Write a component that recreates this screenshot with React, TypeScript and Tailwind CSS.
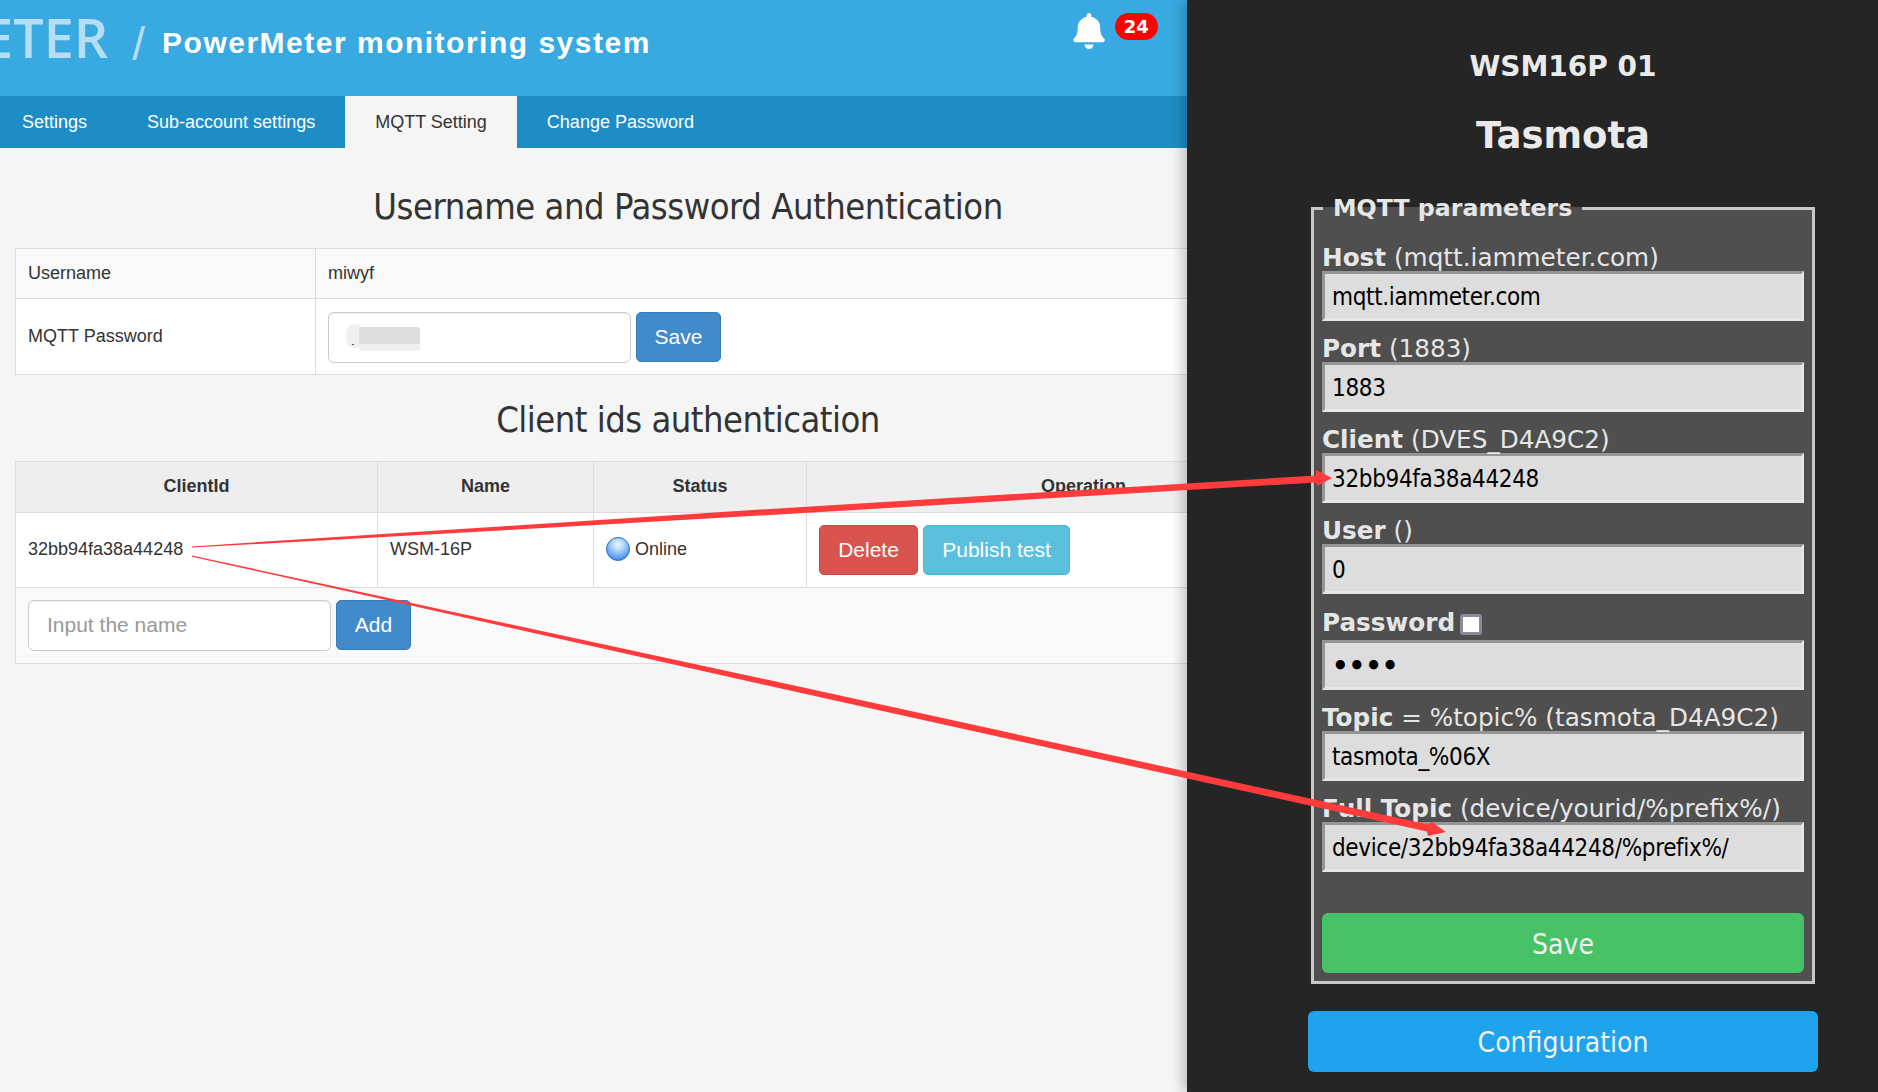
import { FaBell } from 'react-icons/fa';

const tabs = ['Settings', 'Sub-account settings', 'MQTT Setting', 'Change Password'];

const fields = [
  { bold: 'Host', rest: ' (mqtt.iammeter.com)', value: 'mqtt.iammeter.com' },
  { bold: 'Port', rest: ' (1883)', value: '1883' },
  { bold: 'Client', rest: ' (DVES_D4A9C2)', value: '32bb94fa38a44248' },
  { bold: 'User', rest: ' ()', value: '0' },
  { bold: 'Password', rest: '', value: '1234', password: true },
  { bold: 'Topic', rest: ' = %topic% (tasmota_D4A9C2)', value: 'tasmota_%06X' },
  { bold: 'Full Topic', rest: ' (device/yourid/%prefix%/)', value: 'device/32bb94fa38a44248/%prefix%/' },
];

function Field({ bold, rest, value, password }: { bold: string; rest: string; value: string; password?: boolean }) {
  return (
    <div>
      <div className={`flex items-end whitespace-pre text-[24.7px] text-[#e6e6e6] ${password ? 'h-[46px] leading-[34px]' : 'h-[41px] leading-[26px]'}`}>
        <b>{bold}</b>
        <span>{rest}</span>
        {password && (
          <span className="ml-[5px] mb-[5px] h-[21px] w-[22px] rounded-[3px] border-[3px] border-[#8b8b99] bg-white" />
        )}
      </div>
      <input
        readOnly
        type={password ? 'password' : 'text'}
        defaultValue={value}
        className={`block h-[50px] w-full border-[3px] border-t-[#959595] border-l-[#959595] border-r-[#e6e6e6] border-b-[#e6e6e6] bg-[#dddddd] pl-[7px] pt-[2px] text-black outline-none ${
          password
            ? "font-['DejaVu_Sans',sans-serif] text-[26px] font-bold"
            : "font-['DejaVu_Sans_Condensed','DejaVu_Sans',sans-serif] text-[24px] tracking-[-0.35px]"
        }`}
      />
    </div>
  );
}

export default function App() {
  return (
    <div className="relative flex h-[1092px] w-[1878px] overflow-hidden bg-[#252525] font-['Liberation_Sans',Arial,sans-serif]">
      {/* left: the web console, cut off by the dark panel */}
      <div className="h-full w-[1187px] shrink-0 overflow-hidden bg-[#f5f5f5] text-[#333]">
        <div className="w-[1376px]">
          <header className="flex h-[96px] items-start bg-[#38a9e1]">
            <span className="-ml-[17px] mt-[6px] font-['Open_Sans',sans-serif] text-[54px] leading-[62px] font-semibold text-[#b5ddf3]">ETER</span>
            <span className="ml-[24px] mt-[16px] font-['Liberation_Sans',sans-serif] text-[46px] leading-[56px] font-thin text-[#b5ddf3]">/</span>
            <h1 className="ml-[17px] mt-[25px] text-[30px] leading-[36px] font-bold tracking-[1.5px] whitespace-nowrap text-white">
              PowerMeter monitoring system
            </h1>
            <div className="relative ml-[421px] mt-[13px] text-white">
              <FaBell className="h-[36px] w-[34px]" />
            </div>
            <span className="ml-[9px] mt-[13px] flex h-[27px] w-[43px] items-center justify-center rounded-full bg-[#ff0000] font-['DejaVu_Sans',sans-serif] text-[18px] font-bold text-white">
              24
            </span>
          </header>

          <nav className="flex h-[52px] bg-[#1e8dc6] text-[18px]">
            {tabs.map((t, i) => (
              <a
                key={t}
                className={`flex items-center px-[30px] ${i === 0 ? '-ml-[8px]' : ''} ${i === 2 ? 'bg-[#f5f5f5] text-[#333]' : 'text-white'}`}
              >
                {t}
              </a>
            ))}
          </nav>

          <div className="pl-[15px] pr-[15px]">
            <h2 className="pt-[34px] pb-[16px] text-center font-['DejaVu_Sans_Condensed','DejaVu_Sans',sans-serif] text-[36px] leading-[50px] tracking-[-0.45px]">
              Username and Password Authentication
            </h2>
            <table className="w-full table-fixed border-collapse text-[18px]">
              <colgroup>
                <col className="w-[300px]" />
                <col />
              </colgroup>
              <tbody>
                <tr className="h-[50px] bg-[#f9f9f9]">
                  <td className="border border-[#dddddd] px-[12px] pb-[1px]">Username</td>
                  <td className="border border-[#dddddd] px-[12px] pb-[1px]">miwyf</td>
                </tr>
                <tr className="h-[76px] bg-white">
                  <td className="border border-[#dddddd] px-[12px] pb-[1px]">MQTT Password</td>
                  <td className="border border-[#dddddd] px-[12px] pt-[1px]">
                    <div className="flex gap-[5px]">
                      <div className="relative">
                        <input
                          readOnly
                          className="block h-[51px] w-[303px] rounded-[6px] border border-[#cccccc] bg-white px-[19px] text-[21px] shadow-[inset_0_1px_1px_rgba(0,0,0,0.075)] outline-none"
                        />
                        {/* the blurred out password */}
                        <div className="absolute left-[18px] top-[12px] h-[24px] w-[18px] rounded-full bg-[#f0f0f0]" />
                        <div className="absolute left-[31px] top-[15px] h-[24px] w-[61px] rounded-[3px] bg-[linear-gradient(180deg,#dedede_0%,#dedede_72%,#f0f0f0_72%,#f0f0f0_100%)]" />
                        <div className="absolute left-[24px] top-[32px] h-[1px] w-[2px] bg-[#555]" />
                      </div>
                      <button className="h-[50px] w-[85px] rounded-[5px] border border-[#357ebd] bg-[#428bca] text-[21px] text-white">Save</button>
                    </div>
                  </td>
                </tr>
              </tbody>
            </table>

            <h2 className="pt-[20px] pb-[16px] text-center font-['DejaVu_Sans_Condensed','DejaVu_Sans',sans-serif] text-[36px] leading-[50px] tracking-[-0.5px]">
              Client ids authentication
            </h2>
            <table className="w-full table-fixed border-collapse text-[18px]">
              <colgroup>
                <col className="w-[362px]" />
                <col className="w-[216px]" />
                <col className="w-[213px]" />
                <col />
              </colgroup>
              <thead>
                <tr className="h-[51px] bg-[#eeeeee]">
                  {['ClientId', 'Name', 'Status', 'Operation'].map((h) => (
                    <th key={h} className="border border-[#dddddd] pb-[2px] text-center font-bold">{h}</th>
                  ))}
                </tr>
              </thead>
              <tbody>
                <tr className="h-[75px] bg-white">
                  <td className="border border-[#dddddd] px-[12px] pb-[2px]">32bb94fa38a44248</td>
                  <td className="border border-[#dddddd] px-[12px] pb-[2px]">WSM-16P</td>
                  <td className="border border-[#dddddd] px-[12px] pb-[2px]">
                    <div className="flex items-center gap-[5px]">
                      <span className="h-[24px] w-[24px] rounded-full border border-[#2f6fc0] bg-[radial-gradient(circle_at_50%_30%,#f2f8ff_0%,#a8d0fa_35%,#4f95ec_75%,#2a6fcf_100%)]" />
                      Online
                    </div>
                  </td>
                  <td className="border border-[#dddddd] px-[12px]">
                    <div className="flex gap-[5px]">
                      <button className="h-[50px] w-[99px] rounded-[5px] border border-[#d43f3a] bg-[#d9534f] text-[21px] text-white">Delete</button>
                      <button className="h-[50px] w-[147px] rounded-[5px] border border-[#46b8da] bg-[#5bc0de] text-[21px] text-white">Publish test</button>
                    </div>
                  </td>
                </tr>
                <tr className="h-[76px] bg-[#f9f9f9]">
                  <td colSpan={4} className="border border-[#dddddd] px-[12px]">
                    <div className="flex gap-[5px]">
                      <input
                        readOnly
                        placeholder="Input the name"
                        className="block h-[51px] w-[303px] rounded-[6px] border border-[#cccccc] bg-white px-[18px] pb-[2px] text-[21px] shadow-[inset_0_1px_1px_rgba(0,0,0,0.075)] outline-none placeholder:text-[#999]"
                      />
                      <button className="h-[50px] w-[75px] rounded-[5px] border border-[#357ebd] bg-[#428bca] text-[21px] text-white">Add</button>
                    </div>
                  </td>
                </tr>
              </tbody>
            </table>
          </div>
        </div>
      </div>

      {/* right: the Tasmota page */}
      <div className="relative z-10 h-full flex-1 bg-[#252525] pl-[121px] font-['DejaVu_Sans',sans-serif] shadow-[-6px_0_10px_rgba(0,0,0,0.18)]">
        <div className="flex w-[510px] flex-col items-center">
          <h3 className="mt-[52px] text-[28px] leading-[30px] font-bold text-[#eaeaea]">WSM16P 01</h3>
          <h2 className="mt-[34px] text-[37px] leading-[40px] font-bold text-[#eaeaea]">Tasmota</h2>
          <fieldset className="mt-[36px] w-[504px] border-[3px] border-[#c8c8c8] bg-[#4f4f4f] px-[8px] pb-[8px] pt-[6px]">
            <legend className="ml-[1px] px-[10px] text-[23.7px] leading-[32px] font-bold text-[#e6e6e6]">MQTT parameters</legend>
            {fields.map((f) => (
              <Field key={f.bold} {...f} />
            ))}
            <button className="mt-[41px] block h-[60px] w-full rounded-[6px] bg-[#47c266] pt-[3px] font-['DejaVu_Sans_Condensed','DejaVu_Sans',sans-serif] text-[28px] text-[#f0f0f0]">
              Save
            </button>
          </fieldset>
          <button className="mt-[27px] block h-[61px] w-[510px] rounded-[6px] bg-[#1fa3ec] pt-[3px] font-['DejaVu_Sans_Condensed','DejaVu_Sans',sans-serif] text-[28px] text-[#f0f0f0]">
            Configuration
          </button>
        </div>
      </div>

      {/* red hand drawn arrows across both windows */}
      <svg className="pointer-events-none absolute inset-0 z-20" width="1878" height="1092" viewBox="0 0 1878 1092">
        <polygon fill="#ff3b3b" points="192,546.4 500,526.4 760,509.6 1316,475.5 1316,470 1332,478 1317,486 1316,482.5 760,515.6 500,530.4 192,547.6" />
        <polygon fill="#ff3b3b" points="192,555.5 400,600.5 800,686.8 1428,824.5 1432,822 1446,832 1428,836 1427,831.5 800,692.8 400,603.1 192,556.8" />
      </svg>
    </div>
  );
}
